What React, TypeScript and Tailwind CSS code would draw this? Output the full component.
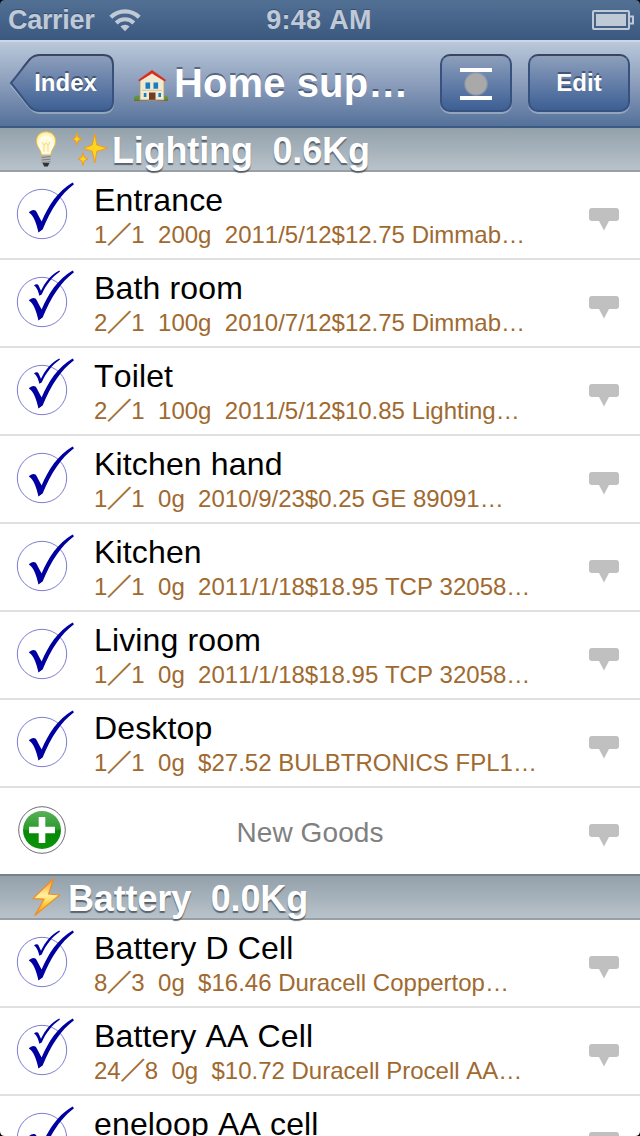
import type { ReactNode } from "react";

type Item = { name: string; count: [string, string]; detail: string; extra?: boolean };

const lighting: Item[] = [
  { name: "Entrance", count: ["1", "1"], detail: "200g  2011/5/12$12.75 Dimmab…" },
  { name: "Bath room", count: ["2", "1"], detail: "100g  2010/7/12$12.75 Dimmab…", extra: true },
  { name: "Toilet", count: ["2", "1"], detail: "100g  2011/5/12$10.85 Lighting…", extra: true },
  { name: "Kitchen hand", count: ["1", "1"], detail: "0g  2010/9/23$0.25 GE 89091…" },
  { name: "Kitchen", count: ["1", "1"], detail: "0g  2011/1/18$18.95 TCP 32058…" },
  { name: "Living room", count: ["1", "1"], detail: "0g  2011/1/18$18.95 TCP 32058…" },
  { name: "Desktop", count: ["1", "1"], detail: "0g  $27.52 BULBTRONICS FPL1…" }
];

const battery: Item[] = [
  { name: "Battery D Cell", count: ["8", "3"], detail: "0g  $16.46 Duracell Coppertop…", extra: true },
  { name: "Battery AA Cell", count: ["24", "8"], detail: "0g  $10.72 Duracell Procell AA…", extra: true }
];

export default function App() {
  return (
    <div className="relative flex h-[1136px] w-[640px] flex-col overflow-hidden bg-white font-['Liberation_Sans','Noto_Sans_CJK_JP',sans-serif] [font-kerning:none]">
      <StatusBar />
      <NavBar />
      <main className="-mt-0.5 flex flex-col">
        <SectionHeader title="Lighting  0.6Kg">
          <BulbIcon />
          <SparklesIcon />
        </SectionHeader>
        {lighting.map((item) => (
          <ItemRow key={item.name} item={item} />
        ))}
        <NewGoodsRow />
        <SectionHeader title="Battery  0.0Kg">
          <BoltIcon />
        </SectionHeader>
        {battery.map((item) => (
          <ItemRow key={item.name} item={item} />
        ))}
        <div className="flex h-10 shrink-0 overflow-hidden pr-5 pl-4">
          <CheckIcon />
          <ItemName>eneloop AA cell</ItemName>
          <NoteIcon />
        </div>
      </main>
      <ScreenCorners />
    </div>
  );
}

function StatusBar() {
  return (
    <div className="grid h-10 shrink-0 grid-cols-3 items-center bg-linear-to-b from-[#526f94] to-[#3b5980] text-[27px] leading-10 font-bold text-[#c0cad7] [text-shadow:0_-1px_0_rgba(30,50,85,0.5)]">
      <div className="flex items-center pl-2">
        <span className="tracking-[-0.3px]">Carrier</span>
        <svg className="ml-[15px] h-6 w-8" viewBox="0 0 32 24" fill="none" stroke="#c0cad7">
          <path d="M1.8 9.2a20 20 0 0 1 28.4 0" strokeWidth="4.2" />
          <path d="M7.2 15a12.4 12.4 0 0 1 17.6 0" strokeWidth="4" />
          <path d="M16 23.2l-4.6-4.6a6.5 6.5 0 0 1 9.2 0z" fill="#c0cad7" stroke="none" />
        </svg>
      </div>
      <span className="-ml-0.5 text-center tracking-[0.3px]">9:48 AM</span>
      <svg className="mr-[5px] h-5 w-[43px] justify-self-end" viewBox="0 0 43 20">
        <rect x="1" y="1" width="36" height="18" rx="1" fill="none" stroke="#c0cad7" strokeWidth="2" />
        <rect x="4" y="4" width="30" height="12" fill="#c0cad7" />
        <path d="M38 6.5h3v7h-3" fill="none" stroke="#c0cad7" strokeWidth="2" />
      </svg>
    </div>
  );
}

function NavBar() {
  return (
    <header className="z-10 flex h-[88px] shrink-0 items-center border-t-2 border-b-2 border-t-[#ccd7e5] border-b-[#3a5985] bg-linear-to-b from-[#b9c8da] via-[#8b9dbb] to-[#54719a] pr-2.5 pl-2.5 pb-0.5 text-white">
      <BackButton />
      <div className="ml-5 flex w-[276px] items-center">
        <HouseIcon />
        <h1 className="ml-1.5 text-[40px] leading-[50px] font-bold tracking-[0.1px] whitespace-nowrap [text-shadow:0_-2px_0_rgba(45,60,85,0.6)]">
          Home sup…
        </h1>
      </div>
      <div className="ml-auto flex gap-4">
        <NavButton className="w-[72px]">
          <svg className="mt-0.5 h-8 w-8" viewBox="0 0 32 32">
            <defs>
              <radialGradient id="dot">
                <stop offset="0.8" stopColor="#a9a9a9" />
                <stop offset="1" stopColor="#a9a9a9" stopOpacity="0" />
              </radialGradient>
            </defs>
            <path d="M0 0h32v4H0zM0 28h32v4H0z" fill="#fff" />
            <circle cx="16" cy="16" r="12.5" fill="url(#dot)" />
          </svg>
        </NavButton>
        <NavButton className="w-[102px]">Edit</NavButton>
      </div>
    </header>
  );
}

function NavButton({ className, children }: { className: string; children: ReactNode }) {
  return (
    <button
      className={`flex h-[58px] items-center justify-center rounded-[10px] border-2 border-[#38527f] border-t-[#3a465e] bg-linear-to-b from-[#8e9fbc] to-[#3c5f94] text-2xl font-bold shadow-[0_2px_0_rgba(255,255,255,0.3)] [text-shadow:0_-2px_0_rgba(35,50,80,0.6)] ${className}`}
    >
      {children}
    </button>
  );
}

function BackButton() {
  return (
    <button className="relative h-[58px] w-[104px] shrink-0 text-2xl font-bold [text-shadow:0_-2px_0_rgba(35,50,80,0.6)]">
      <svg className="absolute inset-0 overflow-visible" width="104" height="58" viewBox="0 0 104 58">
        <defs>
          <linearGradient id="backFill" x2="0" y2="1">
            <stop stopColor="#8e9fbc" />
            <stop offset="1" stopColor="#3c5f94" />
          </linearGradient>
          <linearGradient id="backEdge" x2="0" y2="1">
            <stop stopColor="#3a465e" />
            <stop offset="0.4" stopColor="#38527f" />
            <stop offset="1" stopColor="#38527f" />
          </linearGradient>
        </defs>
        <path
          d="M1 31C10 41 14 47 20 54Q24 59 30 59H93Q103 59 103 49V31"
          fill="none"
          stroke="#fff"
          strokeOpacity="0.3"
          strokeWidth="2"
        />
        <path
          d="M1 29C10 18 14 12 20 5Q24 1 30 1H93Q103 1 103 11V47Q103 57 93 57H30Q24 57 20 53C14 46 10 40 1 29Z"
          fill="url(#backFill)"
          stroke="url(#backEdge)"
          strokeWidth="2"
        />
      </svg>
      <span className="relative pl-[7px]">Index</span>
    </button>
  );
}

function SectionHeader({ title, children }: { title: string; children: ReactNode }) {
  return (
    <div className="flex h-[46px] shrink-0 items-center border-t-2 border-b-2 border-t-[#75828c] border-b-[#989fa5] bg-linear-to-b from-[#93a1ab] to-[#b8c2ca] pl-7">
      <div className="flex gap-2">{children}</div>
      <h2 className="ml-1 pt-[3px] text-4xl leading-[39px] font-bold tracking-[-0.15px] whitespace-pre text-white [text-shadow:0_2px_1px_rgba(60,70,80,0.75)]">
        {title}
      </h2>
    </div>
  );
}

function ItemName({ children }: { children: ReactNode }) {
  return (
    <p className="ml-[18px] pt-2 text-[32px] leading-10 tracking-[0.15px] whitespace-nowrap text-black">{children}</p>
  );
}

function ItemRow({ item }: { item: Item }) {
  return (
    <div className="flex h-[88px] shrink-0 border-b-2 border-[#e0e0e0] pr-5 pl-4">
      <CheckIcon extra={item.extra} />
      <div>
        <ItemName>{item.name}</ItemName>
        <p className="ml-[18px] text-2xl leading-[30px] whitespace-pre text-[#a0692f]">
          {item.count[0]}
          <span className="[-webkit-text-stroke:0.7px_#a0692f]">／</span>
          {item.count[1]}
          {"  "}
          {item.detail}
        </p>
      </div>
      <NoteIcon />
    </div>
  );
}

function NewGoodsRow() {
  return (
    <div className="flex h-[86px] shrink-0 pr-5 pl-4">
      <svg className="mt-4 h-[52px] w-[52px]" viewBox="0 0 52 52">
        <defs>
          <linearGradient id="plusFill" x2="0" y2="1">
            <stop stopColor="#58b058" />
            <stop offset="0.48" stopColor="#2c9a2c" />
            <stop offset="0.52" stopColor="#068806" />
            <stop offset="1" stopColor="#0a940a" />
          </linearGradient>
        </defs>
        <circle cx="26" cy="26" r="23.3" fill="#fff" stroke="#6d6d75" />
        <circle cx="26" cy="26" r="19" fill="url(#plusFill)" />
        <path d="M22.7 13h6.6v9.7H39v6.6h-9.7V39h-6.6v-9.7H13v-6.6h9.7z" fill="#fff" />
      </svg>
      <p className="ml-[26px] w-[432px] pt-[27px] text-center text-[28px] leading-9 tracking-[0.1px] text-[#808080]">
        New Goods
      </p>
      <NoteIcon />
    </div>
  );
}

function CheckIcon({ extra }: { extra?: boolean }) {
  return (
    <svg className="mt-2 h-[60px] w-[60px] shrink-0" viewBox="16 8 60 60" fill="#0000a0">
      <circle cx="42" cy="42" r="24.7" fill="none" stroke="#5a5ac4" strokeWidth="0.8" />
      <path d="M28.8 40.4C31 38 35.3 36.6 36.7 40.3L41.6 49.6C48 34 58 18.6 72.6 10.4L74 12.2C61 22 51 37 42.6 57.6L38.4 60.4C37 53 33.5 42.5 28.8 40.4Z" />
      {extra ? (
        <path d="M34 25.5C35.5 24 37.6 23.5 38.6 25.5L41 30.8C45 22 51 14.5 59.3 10.4L60 11.6C52 17 46 25 41.7 34.6L39.3 35.8C38.5 31 36.5 27 34 25.5Z" />
      ) : null}
    </svg>
  );
}

function NoteIcon() {
  return (
    <svg className="mt-9 ml-auto h-[23px] w-8 shrink-0" viewBox="0 0 32 23">
      <path d="M4 0H28Q31 0 31 3V10Q31 13 28 13H21L16 22.5L11 13H4Q1 13 1 10V3Q1 0 4 0Z" fill="#c0c0c0" />
    </svg>
  );
}

function HouseIcon() {
  return (
    <svg className="mt-1.5 h-8 w-[34px] shrink-0" viewBox="0 0 34 32">
      <path d="M0 27Q4 24 8 27H26Q30 24 34 27V31H0Z" fill="#58983b" />
      <path d="M0 29.6H34V31H0Z" fill="#87642f" />
      <path d="M6 10L18 2L30 10V30H6Z" fill="#f1ead0" stroke="#ac9b76" strokeWidth="0.8" />
      <path d="M18 0L32 10L30.8 11.5L18 3.5L5.2 11.5L4.2 10Z" fill="#d92d20" />
      <path d="M11.5 12.5h4.6v6.2h-4.6zM19.5 12.5h4.6v6.2h-4.6zM9.8 23h2.6v4h-2.6zM24.4 23h2.6v4h-2.6z" fill="#187cc6" />
      <path d="M8 19.8h20v1.2H8z" fill="#d8cba5" />
      <path d="M15 22.5h6.5V31H15z" fill="#733c25" />
      <path d="M13.5 29.7h9.5V31h-9.5z" fill="#9c8d78" />
    </svg>
  );
}

function BulbIcon() {
  return (
    <svg className="h-9 w-9" viewBox="0 0 36 36">
      <defs>
        <radialGradient id="bulbGlass" cx="0.5" cy="0.55">
          <stop stopColor="#fff6c4" />
          <stop offset="0.7" stopColor="#fffdf0" />
          <stop offset="1" stopColor="#ffefa0" />
        </radialGradient>
      </defs>
      <path
        d="M18 .8C12 .8 8.3 5 8.3 10.3C8.3 16 13 18 13.4 24H22.8C23.2 18 27.7 16 27.7 10.3C27.7 5 24 .8 18 .8Z"
        fill="url(#bulbGlass)"
        stroke="#e5b53f"
        strokeWidth="0.9"
      />
      <path d="M14 11l2 3 2-2 2 2 2-3M16 14v7M20 14v7" fill="none" stroke="#f5d268" strokeWidth="0.8" />
      <path d="M13.4 24h9.2v7.5l-2.1 3.2h-5l-2.1-3.2z" fill="#b4b6b8" />
      <path d="M13.6 26.4l9-.8M13.6 29l9-.8M13.8 31.6l8.6-.8" stroke="#7b7f83" strokeWidth="1" />
      <path d="M14.6 32h6.8l-1.6 3.6h-3.6z" fill="#303234" />
    </svg>
  );
}

function SparklesIcon() {
  return (
    <svg className="h-9 w-9" viewBox="0 0 36 36" fill="#ffd51f" stroke="#f39a21" strokeWidth="1">
      <path d="M22.8 2.5L24.8 14L35.5 17.3L24.8 20.3L22.8 32L20.3 20.3L11.5 17.3L20.3 14Z" />
      <path d="M4.8 1.5L6 6.6L10 8L6 9.6L4.8 14L3.6 9.6L.5 8L3.6 6.6Z" />
      <path d="M11 21.5L12.3 26.4L16 28L12.3 29.6L11 34.5L9.7 29.6L6 28L9.7 26.4Z" />
    </svg>
  );
}

function BoltIcon() {
  return (
    <svg className="h-[38px] w-9" viewBox="0 0 36 38">
      <defs>
        <linearGradient id="boltFill" x2="0" y2="1">
          <stop stopColor="#ff9a1f" />
          <stop offset="0.45" stopColor="#fff1a0" />
          <stop offset="0.65" stopColor="#ffd548" />
          <stop offset="1" stopColor="#f78a1d" />
        </linearGradient>
      </defs>
      <path
        d="M25.5 .8L5 20.6L16 21.2L7 37.4L31.5 17L20.6 16Z"
        fill="url(#boltFill)"
        stroke="#f28c22"
        strokeWidth="1.2"
        strokeLinejoin="round"
      />
    </svg>
  );
}

// Black masks that round off the display
function ScreenCorners() {
  return (
    <>
      <svg className="absolute top-0 left-0 z-20 h-2 w-2" viewBox="0 0 8 8">
        <path d="M0 0H5Q0 0 0 5Z" />
      </svg>
      <svg className="absolute top-0 right-0 z-20 h-2 w-2" viewBox="0 0 8 8">
        <path d="M8 0H3Q8 0 8 5Z" />
      </svg>
      <svg className="absolute bottom-0 left-0 z-20 h-2 w-2" viewBox="0 0 8 8">
        <path d="M0 8H5Q0 8 0 3Z" />
      </svg>
      <svg className="absolute right-0 bottom-0 z-20 h-2 w-2" viewBox="0 0 8 8">
        <path d="M8 8H3Q8 8 8 3Z" />
      </svg>
    </>
  );
}
